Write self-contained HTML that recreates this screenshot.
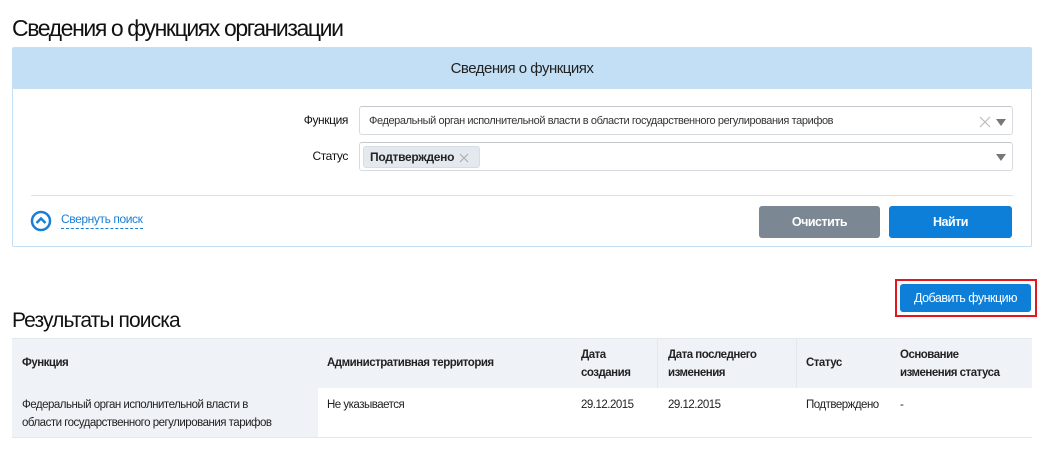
<!DOCTYPE html>
<html><head><meta charset="utf-8"><style>
*{box-sizing:border-box;margin:0;padding:0}
body{width:1050px;height:453px;background:#fff;font-family:"Liberation Sans",sans-serif;color:#222;position:relative;overflow:hidden}
.a{position:absolute}
.t{font-size:23px;letter-spacing:-0.9px;color:#111}
.c{letter-spacing:-0.4px}
.panel{left:12px;top:47px;width:1020px;height:200px;border:1px solid #c5dff5;border-radius:2px}
.hdr{left:0;top:0;width:1018px;height:41px;background:#c3dff5;text-align:center;line-height:41px;font-size:15px;letter-spacing:-0.5px}
.inp{border:1px solid #d7dbe0;border-top-color:#c4c8cc;border-radius:3px;background:#fff}
.lbl{font-size:12px;text-align:right;width:80px;letter-spacing:-0.4px;color:#111}
.btn{color:#fff;font-size:12.5px;font-weight:bold;text-align:center;border-radius:3px;letter-spacing:-0.5px}
.th{font-size:11.5px;font-weight:bold;letter-spacing:-0.5px;line-height:18px}
.td{font-size:11.5px;letter-spacing:-0.5px;line-height:18px}
.tri{width:0;height:0;border-left:5px solid transparent;border-right:5px solid transparent;border-top:7px solid #777}
</style></head><body>
<div class="a t" style="left:12px;top:15px;letter-spacing:-1.4px">Сведения о функциях организации</div>
<div class="a panel">
 <div class="a hdr">Сведения о функциях</div>
 <div class="a lbl" style="left:255px;top:65px">Функция</div>
 <div class="a inp" style="left:346px;top:58px;width:654px;height:29px"></div>
 <div class="a c" style="left:356px;top:67px;font-size:11px;color:#333">Федеральный орган исполнительной власти в области государственного регулирования тарифов</div>
 <svg class="a" style="left:966px;top:68px" width="12" height="12"><path d="M1 1L11 11M11 1L1 11" stroke="#bbb" stroke-width="1.2"/></svg>
 <div class="a tri" style="left:983px;top:71px"></div>
 <div class="a lbl" style="left:255px;top:101px">Статус</div>
 <div class="a inp" style="left:346px;top:94px;width:654px;height:29px"></div>
 <div class="a" style="left:350px;top:98px;width:117px;height:22px;background:#e4e9f0;border-radius:3px;border:1px solid #d6dde6"></div>
 <div class="a" style="left:357px;top:102px;font-size:12px;font-weight:bold;letter-spacing:-0.3px">Подтверждено</div>
 <svg class="a" style="left:446px;top:105px" width="10" height="10"><path d="M1 1L9 9M9 1L1 9" stroke="#aaa" stroke-width="1"/></svg>
 <div class="a tri" style="left:983px;top:106px"></div>
 <div class="a" style="left:18px;top:147px;width:982px;height:1px;background:#dde2e6"></div>
 <svg class="a" style="left:17px;top:162px" width="22" height="22"><circle cx="11" cy="11" r="9" fill="none" stroke="#1a7fd4" stroke-width="2.5"/><path d="M6.5 13L11 8.5L15.5 13" fill="none" stroke="#1a7fd4" stroke-width="2.5"/></svg>
 <div class="a c" style="left:48px;top:164px;font-size:12px;color:#1a7fd4;border-bottom:1px dashed #1a7fd4;padding-bottom:2px">Свернуть поиск</div>
 <div class="a btn" style="left:746px;top:158px;width:121px;height:32px;line-height:32px;background:#7b8792">Очистить</div>
 <div class="a btn" style="left:876px;top:158px;width:123px;height:32px;line-height:32px;background:#0e7fd9">Найти</div>
</div>
<div class="a" style="left:895px;top:279px;width:142px;height:38px;border:2px solid #e3171f"></div>
<div class="a btn" style="left:900px;top:284px;width:131px;height:28px;line-height:28px;background:#0e7fd9;font-weight:normal">Добавить функцию</div>
<div class="a t" style="left:12px;top:309px;font-size:21px">Результаты поиска</div>
<div class="a" style="left:12px;top:338px;width:1020px;height:50px;background:#eff3f7;border-top:1px solid #e3e8ec"></div>
<div class="a" style="left:12px;top:388px;width:306px;height:49px;background:#eff3f7"></div>
<div class="a" style="left:12px;top:437px;width:1020px;height:1px;background:#e3e8ec"></div>
<div class="a" style="left:657px;top:338px;width:1px;height:50px;background:#e3e8ec"></div>
<div class="a" style="left:796px;top:338px;width:1px;height:50px;background:#e3e8ec"></div>
<div class="a th" style="left:22px;top:354px">Функция</div>
<div class="a th" style="left:327px;top:354px">Административная территория</div>
<div class="a th" style="left:581px;top:346px">Дата<br>создания</div>
<div class="a th" style="left:668px;top:346px">Дата последнего<br>изменения</div>
<div class="a th" style="left:806px;top:354px">Статус</div>
<div class="a th" style="left:900px;top:346px">Основание<br>изменения статуса</div>
<div class="a td" style="left:22px;top:396px">Федеральный орган исполнительной власти в<br>области государственного регулирования тарифов</div>
<div class="a td" style="left:327px;top:396px">Не указывается</div>
<div class="a td" style="left:581px;top:396px">29.12.2015</div>
<div class="a td" style="left:668px;top:396px">29.12.2015</div>
<div class="a td" style="left:806px;top:396px">Подтверждено</div>
<div class="a td" style="left:900px;top:396px">-</div>
</body></html>
